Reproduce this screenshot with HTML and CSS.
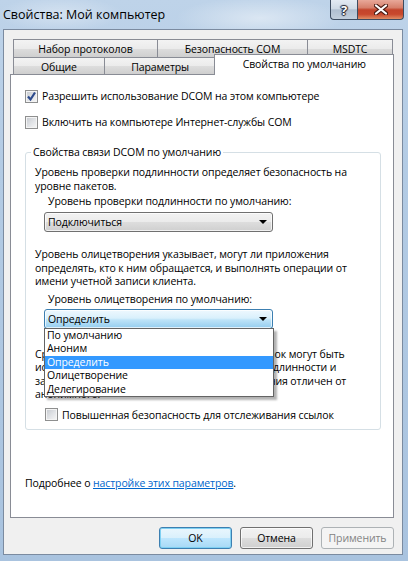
FILE: index.html
```html
<!DOCTYPE html>
<html lang="ru">
<head>
<meta charset="utf-8">
<title>Свойства: Мой компьютер</title>
<link rel="stylesheet" href="styles.css">
</head>
<body>
<div class="window">
  <div class="titlebar">
    <div class="title">Свойства: Мой компьютер</div>
    <div class="caption">
      <div class="cbtn help">?</div>
      <div class="cbtn close">
        <svg width="14" height="11" viewBox="0 0 14 11">
          <path d="M2 1.5 L12 9.5 M12 1.5 L2 9.5" stroke="#4a1a12" stroke-width="4.2" stroke-linecap="round"/>
          <path d="M2 1.5 L12 9.5 M12 1.5 L2 9.5" stroke="#ffffff" stroke-width="2.2" stroke-linecap="round"/>
        </svg>
      </div>
    </div>
  </div>
  <div class="client">
    <div class="tabs">
      <div class="tabrow row1">
        <div class="tab t-proto">Набор протоколов</div>
        <div class="tab t-sec">Безопасность COM</div>
        <div class="tab t-msdtc">MSDTC</div>
      </div>
      <div class="tabrow row2">
        <div class="tab t-gen">Общие</div>
        <div class="tab t-par">Параметры</div>
        <div class="tab tab-active">Свойства по умолчанию</div>
      </div>
    </div>
    <div class="pane">
      <div class="cbrow first">
        <span class="cb"><svg width="11" height="11" viewBox="0 0 11 11"><path d="M2 5.5 L4.5 8.5 L9 1.5" fill="none" stroke="#2c4a8c" stroke-width="2.2"/></svg></span>
        <span>Разрешить использование DCOM на этом компьютере</span>
      </div>
      <div class="cbrow second">
        <span class="cb"></span>
        <span>Включить на компьютере Интернет-службы COM</span>
      </div>
      <div class="group">
        <div class="legend">Свойства связи DCOM по умолчанию</div>
        <div class="para p1">Уровень проверки подлинности определяет безопасность на<br>уровне пакетов.</div>
        <div class="label l1">Уровень проверки подлинности по умолчанию:</div>
        <div class="combo c1"><span>Подключиться</span><span class="arrow"></span></div>
        <div class="para p2">Уровень олицетворения указывает, могут ли приложения<br>определять, кто к ним обращается, и выполнять операции от<br>имени учетной записи клиента.</div>
        <div class="label l2">Уровень олицетворения по умолчанию:</div>
        <div class="combo c2"><span>Определить</span><span class="arrow"></span>
          <div class="droplist">
            <div class="item">По умолчанию</div>
            <div class="item">Аноним</div>
            <div class="item selected">Определить</div>
            <div class="item">Олицетворение</div>
            <div class="item">Делегирование</div>
          </div>
        </div>
        <div class="para p3">Средства безопасности для отслеживания ссылок могут быть<br>использованы, если используется проверка подлинности и<br>заданный по умолчанию уровень олицетворения отличен от<br>анонимного.</div>
        <div class="cbrow third">
          <span class="cb"></span>
          <span>Повышенная безопасность для отслеживания ссылок</span>
        </div>
      </div>
      <div class="more">Подробнее о <a class="link" href="#">настройке этих параметров</a>.</div>
    </div>
    <div class="buttons">
      <div class="btn default">OK</div>
      <div class="btn">Отмена</div>
      <div class="btn disabled">Применить</div>
    </div>
  </div>
</div>
</body>
</html>
```
FILE: styles.css
```css
* { box-sizing: border-box; }
html, body { margin: 0; padding: 0; }
body {
  width: 408px;
  height: 561px;
  overflow: hidden;
  font-family: "Open Sans", "Noto Sans", sans-serif;
  font-size: 10.5px;
  letter-spacing: -0.1px;
  color: #000;
}
.window {
  width: 408px;
  height: 561px;
  display: flex;
  flex-direction: column;
  padding: 0 5px 6px 3px;
  background:
    radial-gradient(ellipse 120px 30px at 260px 18px, rgba(255,255,255,0.45), rgba(255,255,255,0) 70%),
    radial-gradient(ellipse 90px 25px at 60px 14px, rgba(255,255,255,0.35), rgba(255,255,255,0) 70%),
    linear-gradient(180deg, #bed3e9 0%, #b3cbe4 30%, #a9c3df 100%);
}
.titlebar {
  height: 29px;
  flex: none;
  display: flex;
  justify-content: space-between;
  align-items: flex-start;
}
.title {
  margin-top: 6px;
  font-size: 12.5px;
  letter-spacing: 0;
  line-height: 18px;
  color: #000;
}
.caption { display: flex; margin-right: -1px; }
.cbtn {
  height: 20px;
  border: 1px solid #3d4c61;
  border-top: none;
  display: flex;
  align-items: center;
  justify-content: center;
}
.help {
  width: 27px;
  border-right: none;
  border-radius: 0 0 0 4px;
  background: linear-gradient(180deg, #e3eaf3 0%, #cfdae6 45%, #b0bfd1 52%, #c2cfdd 100%);
  color: #fff;
  font-weight: bold;
  font-size: 13px;
  text-shadow: 0 0 1px #223, 1px 0 1px #223, -1px 0 1px #223, 0 1px 1px #223, 0 -1px 1px #223;
}
.close {
  width: 47px;
  border-radius: 0 0 4px 0;
  background: linear-gradient(180deg, #e8a899 0%, #d6806c 40%, #c3442b 52%, #c8482d 75%, #e08d64 100%);
}
.client {
  flex: 1;
  display: flex;
  flex-direction: column;
  background: #f0f0f0;
  border: 1px solid #7b8ba0;
  padding: 9px 8px 5px 6px;
}
.tabs { margin-left: 3px; flex: none; }
.tabrow { display: flex; }
.row1 { height: 18px; }
.row2 { height: 17px; }
.tab {
  border: 1px solid #898c95;
  border-bottom: none;
  margin-left: -1px;
  background: linear-gradient(180deg, #f3f3f3 0%, #ebebeb 50%, #dddddd 51%, #cfcfcf 100%);
  display: flex;
  align-items: center;
  justify-content: center;
  padding-top: 1px;
  white-space: nowrap;
}
.t-proto { width: 145px; margin-left: 0; }
.t-sec { width: 151px; }
.t-msdtc { width: 86px; }
.t-gen { width: 92px; margin-left: 0; }
.t-par { width: 113px; }
.tab-active {
  width: 180px;
  height: 21px;
  margin-left: -2px;
  margin-top: -3px;
  margin-bottom: -1px;
  background: #fff;
  position: relative;
  z-index: 1;
  align-items: flex-start;
  padding-top: 2px;
}
.pane {
  flex: none;
  height: 444px;
  background: #fff;
  border: 1px solid #898c95;
  padding: 0 12px 0 14px;
}
.cbrow {
  display: flex;
  align-items: center;
  height: 16px;
  line-height: 16px;
  white-space: nowrap;
}
.cbrow.first { margin-top: 13px; }
.cbrow.second { margin-top: 10px; }
.cbrow.third { margin-top: 5px; margin-left: 10px; }
.cb {
  width: 13px;
  height: 13px;
  flex: none;
  margin-right: 4px;
  border: 1px solid #8e8f8f;
  background: linear-gradient(135deg, #c4c8ce 0%, #e2e4e7 55%, #f7f7f7 100%);
  box-shadow: inset 0 0 0 1px #f4f4f4;
  display: flex;
  align-items: center;
  justify-content: center;
}
.group {
  margin-top: 22px;
  border: 1px solid #d5dfe5;
  border-radius: 3px;
  padding: 0 0 6px 9px;
}
.legend {
  display: table;
  margin: -9px 0 0 -4px;
  padding: 0 2px;
  background: #fff;
  line-height: 16px;
}
.para { line-height: 13.5px; white-space: nowrap; }
.p1 { margin-top: 6px; }
.p2 { margin-top: 16px; }
.p3 { margin-top: 19px; }
.label { line-height: 13.5px; margin-left: 13px; white-space: nowrap; }
.l1 { margin-top: 2px; }
.l2 { margin-top: 4.5px; }
.combo {
  width: 229px;
  height: 20px;
  margin-left: 9px;
  border: 1px solid #707070;
  border-radius: 3px;
  background: linear-gradient(180deg, #f2f2f2 0%, #ebebeb 50%, #dddddd 51%, #cfcfcf 100%);
  box-shadow: inset 0 0 0 1px rgba(255,255,255,0.7);
  display: flex;
  align-items: center;
  justify-content: space-between;
  padding: 0 5px 0 3px;
}
.c1 { margin-top: 3.5px; }
.c2 {
  margin-top: 2px;
  position: relative;
  border-color: #3c7fb1;
  background: linear-gradient(180deg, #eef8fe 0%, #d9f0fc 45%, #bde3f8 55%, #94cdef 100%);
}
.arrow {
  width: 0;
  height: 0;
  border-left: 4px solid transparent;
  border-right: 4px solid transparent;
  border-top: 4px solid #000;
}
.droplist {
  position: absolute;
  top: 100%;
  left: -1px;
  width: 230px;
  background: #fff;
  border: 1px solid #646464;
  box-shadow: 3px 3px 2px rgba(0,0,0,0.3);
  z-index: 5;
}
.item { line-height: 13.5px; padding-left: 2px; white-space: nowrap; }
.item.selected { background: #3399ff; color: #fff; }
.more { margin-top: 45px; line-height: 16px; white-space: nowrap; }
.link { color: #0066cc; text-decoration: underline; }
.buttons {
  margin-top: auto;
  display: flex;
  justify-content: flex-end;
  gap: 8px;
}
.btn {
  width: 73px;
  height: 22px;
  border: 1px solid #707070;
  border-radius: 3px;
  background: linear-gradient(180deg, #f2f2f2 0%, #ebebeb 50%, #dddddd 51%, #cfcfcf 100%);
  box-shadow: inset 0 0 0 1px rgba(255,255,255,0.7);
  display: flex;
  align-items: center;
  justify-content: center;
}
.btn.default {
  border-color: #3c7fb1;
  background: linear-gradient(180deg, #eaf6fd 0%, #d9f0fc 50%, #bee6fd 51%, #a7d9f5 100%);
  box-shadow: inset 0 0 0 1px #7fd0f2;
}
.btn.disabled {
  border-color: #adb2b5;
  background: #f4f4f4;
  box-shadow: none;
  color: #838383;
}
```
